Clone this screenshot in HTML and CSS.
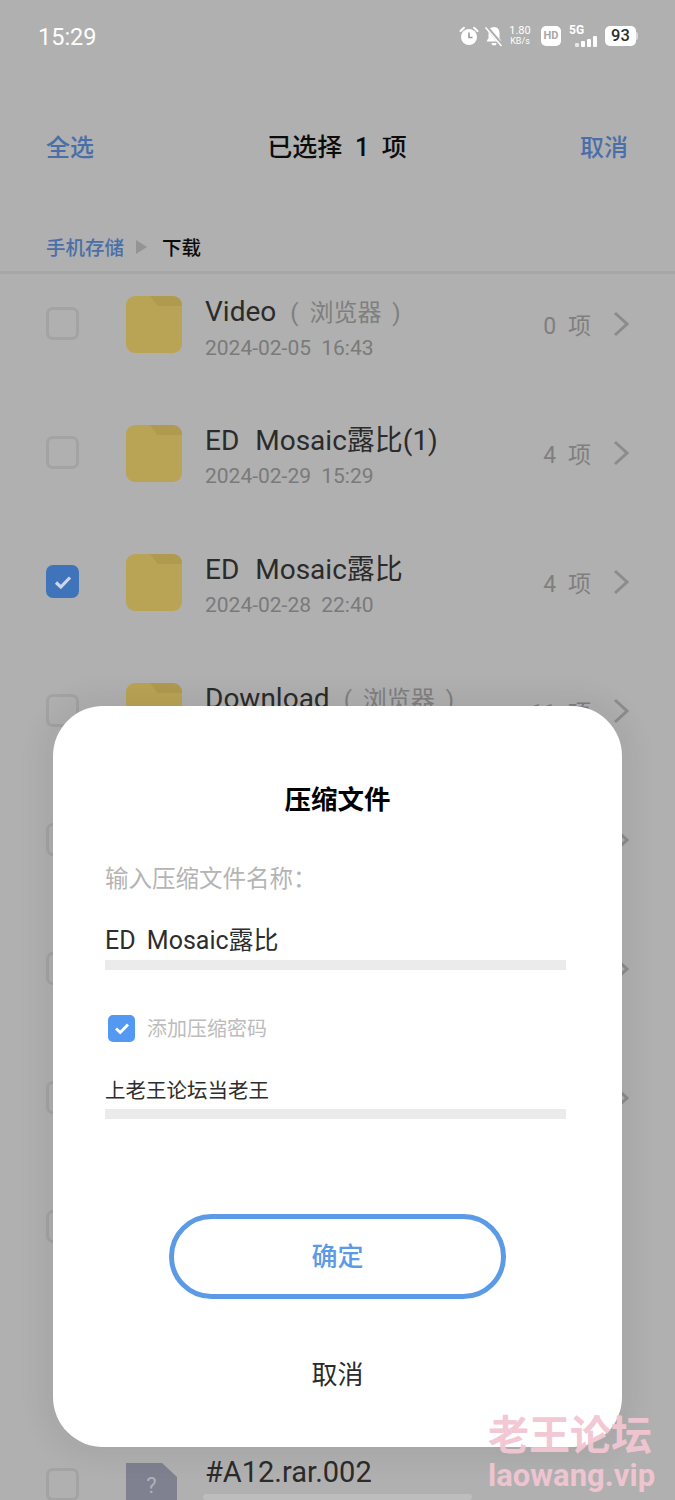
FILE: index.html
```html
<!DOCTYPE html>
<html lang="zh-CN">
<head>
<meta charset="utf-8">
<title>压缩文件</title>
<link rel="stylesheet" href="styles.css">
</head>
<body>
<div class="page">
  <header class="status">
    <span class="time">15:29</span>
    <div class="status-icons">
      <svg class="ic-alarm" width="20" height="20" viewBox="0 0 20 20"><circle cx="10" cy="11" r="8" fill="#fff"/><path d="M1.5 5 5 1.8M18.5 5 15 1.8" stroke="#fff" stroke-width="2" stroke-linecap="round"/><path d="M10 6.5V11.5H13.5" stroke="#9a9a9a" stroke-width="1.6" fill="none"/></svg>
      <svg class="ic-bell" width="20" height="22" viewBox="0 0 20 22"><path d="M10 2c-3.600 0-5.500 2.800-5.500 6v5L2.500 16.500h15L15.500 13V8c0-3.200-1.900-6-5.500-6z" fill="#fff"/><path d="M7.500 18a2.500 2.500 0 0 0 5 0z" fill="#fff"/><path d="M2 1.500 18 20" stroke="#b0b0b0" stroke-width="3.500"/><path d="M1.500 2.500 17.500 21" stroke="#fff" stroke-width="1.500"/></svg>
      <div class="speed"><span>1.80</span><span class="speed-unit">KB/s</span></div>
      <span class="hd">HD</span>
      <div class="signal">
        <span class="five-g">5G</span>
        <div class="bars"><i class="b1"></i><i class="b2"></i><i class="b3"></i><i class="b4"></i></div>
      </div>
      <div class="battery"><span class="batt-body">93</span><i class="batt-tip"></i></div>
    </div>
  </header>

  <nav class="nav">
    <span class="nav-link">全选</span>
    <span class="nav-title">已选择 1 项</span>
    <span class="nav-link">取消</span>
  </nav>

  <div class="crumbs">
    <span class="crumb-link">手机存储</span>
    <svg class="crumb-arrow" width="11" height="14" viewBox="0 0 11 14"><path d="M0 0 11 7 0 14z" fill="#949494"/></svg>
    <span class="crumb-here">下载</span>
  </div>

  <main class="list">
    <div class="row">
      <span class="check"></span>
      <span class="folder"><i></i></span>
      <div class="info"><div class="name">Video<span class="tag">( 浏览器 )</span></div><div class="date">2024-02-05 16:43</div></div>
      <span class="count">0 项</span>
      <svg class="chev" width="16" height="26" viewBox="0 0 16 26"><path d="M2 2 14 13 2 24" fill="none" stroke="#8c8c8c" stroke-width="3"/></svg>
    </div>
    <div class="row">
      <span class="check"></span>
      <span class="folder"><i></i></span>
      <div class="info"><div class="name">ED Mosaic露比(1)</div><div class="date">2024-02-29 15:29</div></div>
      <span class="count">4 项</span>
      <svg class="chev" width="16" height="26" viewBox="0 0 16 26"><path d="M2 2 14 13 2 24" fill="none" stroke="#8c8c8c" stroke-width="3"/></svg>
    </div>
    <div class="row">
      <span class="check check-on"><svg width="18" height="14" viewBox="0 0 18 14"><path d="M2 7.500 6.800 12 16 2.500" fill="none" stroke="#cdd6e4" stroke-width="3.200"/></svg></span>
      <span class="folder"><i></i></span>
      <div class="info"><div class="name">ED Mosaic露比</div><div class="date">2024-02-28 22:40</div></div>
      <span class="count">4 项</span>
      <svg class="chev" width="16" height="26" viewBox="0 0 16 26"><path d="M2 2 14 13 2 24" fill="none" stroke="#8c8c8c" stroke-width="3"/></svg>
    </div>
    <div class="row">
      <span class="check"></span>
      <span class="folder"><i></i></span>
      <div class="info"><div class="name">Download<span class="tag">( 浏览器 )</span></div><div class="date">&nbsp;</div></div>
      <span class="count">11 项</span>
      <svg class="chev" width="16" height="26" viewBox="0 0 16 26"><path d="M2 2 14 13 2 24" fill="none" stroke="#8c8c8c" stroke-width="3"/></svg>
    </div>
    <div class="row"><span class="check"></span><span class="spacer"></span><svg class="chev" width="16" height="26" viewBox="0 0 16 26"><path d="M2 2 14 13 2 24" fill="none" stroke="#8c8c8c" stroke-width="3"/></svg></div>
    <div class="row"><span class="check"></span><span class="spacer"></span><svg class="chev" width="16" height="26" viewBox="0 0 16 26"><path d="M2 2 14 13 2 24" fill="none" stroke="#8c8c8c" stroke-width="3"/></svg></div>
    <div class="row"><span class="check"></span><span class="spacer"></span><svg class="chev" width="16" height="26" viewBox="0 0 16 26"><path d="M2 2 14 13 2 24" fill="none" stroke="#8c8c8c" stroke-width="3"/></svg></div>
    <div class="row"><span class="check"></span><span class="spacer"></span></div>
    <div class="row"><span class="spacer"></span></div>
    <div class="row row-file">
      <span class="check"></span>
      <span class="file-icon">?</span>
      <div class="info info-file"><div class="name name-file">#A12.rar.002</div><div class="progress"></div></div>
    </div>
  </main>

  <section class="dialog">
    <h2 class="dlg-title">压缩文件</h2>
    <p class="dlg-label">输入压缩文件名称：</p>
    <div class="field">ED Mosaic露比</div>
    <div class="opt">
      <span class="opt-check"><svg width="16" height="13" viewBox="0 0 16 13"><path d="M2 6.500 6.200 10.500 14 2.500" fill="none" stroke="#fff" stroke-width="2.800"/></svg></span>
      <span class="opt-text">添加压缩密码</span>
    </div>
    <div class="field field-pass">上老王论坛当老王</div>
    <button class="ok" type="button">确定</button>
    <button class="cancel" type="button">取消</button>
  </section>

  <div class="watermark">
    <span class="wm-cn">老王论坛</span>
    <span class="wm-en">laowang.vip</span>
  </div>
</div>
</body>
</html>
```
FILE: styles.css
```css
* { box-sizing: border-box; }
html, body { margin: 0; padding: 0; }
body {
  width: 675px;
  height: 1500px;
  overflow: hidden;
  font-family: "Roboto", "Noto Sans CJK SC", sans-serif;
}
.page {
  position: relative;
  width: 675px;
  height: 1500px;
  overflow: hidden;
  background: #b0b0b0;
}
.status {
  height: 72px;
  display: flex;
  align-items: center;
  justify-content: space-between;
  padding: 0 37px 0 38px;
  color: #fff;
}
.time { font-size: 23.5px; line-height: 1; margin-top: 3px; }
.status-icons { display: flex; align-items: center; gap: 8px; }
.ic-bell { margin: 0 -4px 0 -3px; }
.speed {
  display: flex;
  flex-direction: column;
  font-size: 11px;
  line-height: 10px;
  text-align: center;
  width: 24px;
}
.speed-unit { font-size: 9px; }
.hd {
  width: 20px;
  height: 20px;
  margin-left: 1px;
  border-radius: 5px;
  background: #fff;
  color: #a8a8a8;
  font-size: 11px;
  font-weight: 700;
  line-height: 20px;
  text-align: center;
}
.signal { position: relative; width: 28px; height: 24px; }
.five-g { position: absolute; left: 0; top: 0; font-size: 12px; font-weight: 700; line-height: 12px; }
.bars { position: absolute; right: 0; bottom: 1px; display: flex; align-items: flex-end; gap: 2px; }
.bars i { width: 4px; background: #fff; display: block; border-radius: 1px; }
.b1 { height: 4px; opacity: .7; }
.b2 { height: 6px; }
.b3 { height: 8px; }
.b4 { height: 11px; }
.battery { display: flex; align-items: center; }
.batt-body {
  width: 31px;
  height: 20px;
  background: #fff;
  border-radius: 5px;
  color: #2e2e2e;
  font-size: 16.500px;
  font-weight: 500;
  line-height: 20px;
  text-align: center;
}
.batt-tip { width: 2px; height: 8px; background: #d8d8d8; border-radius: 0 2px 2px 0; display: block; }

.nav {
  height: 146px;
  display: flex;
  align-items: center;
  justify-content: space-between;
  padding: 0 47px 0 46px;
}
.nav-link { color: #4a6fa8; font-size: 24px; font-weight: 500; }
.nav-title { color: #0c0c0c; font-size: 25px; font-weight: 500; word-spacing: 6.500px; }

.crumbs {
  height: 49px;
  margin-top: 7px;
  padding: 0 46px 3px;
  display: flex;
  align-items: center;
  gap: 12px;
  border-bottom: 3px solid #a6a6a6;
}
.crumb-link { color: #4a6fa8; font-size: 19.500px; font-weight: 500; }
.crumb-here { color: #0c0c0c; font-size: 19.500px; font-weight: 500; margin-left: 3px; }

.list { display: flex; flex-direction: column; margin-top: -15px; }
.row {
  flex: none;
  height: 129px;
  display: flex;
  align-items: center;
  padding: 0 46px;
}
.check {
  flex: none;
  width: 33px;
  height: 33px;
  border: 3px solid #a3a3a3;
  border-radius: 7px;
  display: flex;
  align-items: center;
  justify-content: center;
}
.check-on { background: #3f74bb; border-color: #3f74bb; }
.folder {
  position: relative;
  flex: none;
  width: 56px;
  height: 57px;
  margin: 2px 0 0 47px;
  border-radius: 9px;
  background: #b9a354;
  overflow: hidden;
}
.folder i {
  position: absolute;
  right: 0;
  top: 0;
  width: 32px;
  height: 10px;
  background: #b09a50;
  clip-path: polygon(0 0, 100% 0, 100% 100%, 24% 100%);
}
.info { flex: 1; min-width: 0; margin-left: 23px; padding-top: 9px; }
.name { color: #2b2b2b; font-size: 28px; line-height: 36px; word-spacing: 9px; white-space: nowrap; margin-top: -2px; }
.tag { color: #7f7f7f; font-size: 24px; word-spacing: 5px; margin-left: 14px; }
.date { color: #7a7a7a; font-size: 21px; line-height: 26px; margin-top: 4px; word-spacing: 5px; }
.count { color: #7f7f7f; font-size: 23px; word-spacing: 6px; margin-right: 22px; }
.chev { flex: none; }
.spacer { flex: 1; }

.file-icon {
  flex: none;
  align-self: flex-start;
  width: 51px;
  height: 37px;
  margin: 43px 0 0 47px;
  padding-top: 9px;
  background: #7f8190;
  color: #aeb0ba;
  font-size: 22px;
  line-height: 28px;
  text-align: center;
  clip-path: polygon(0 0, 36px 0, 100% 14px, 100% 100%, 0 100%);
}
.info-file { align-self: flex-start; margin: 34px 0 0 28px; padding-top: 0; }
.name-file { font-size: 29px; margin-top: 0; }
.progress { width: 269px; height: 6px; border-radius: 3px; background: #bdbdbd; margin: 4px 0 0 -2px; }

.dialog {
  position: absolute;
  left: 53px;
  top: 706px;
  width: 569px;
  height: 741px;
  padding: 0 56px 0 52px;
  background: #fff;
  border-radius: 50px;
  box-shadow: 0 0 24px 14px rgba(0, 0, 0, .05);
  display: flex;
  flex-direction: column;
}
.dlg-title {
  margin: 76px 0 0 4px;
  font-size: 26.500px;
  line-height: 36px;
  font-weight: 700;
  color: #000;
  text-align: center;
}
.dlg-label { margin: 45px 0 0; font-size: 23.500px; line-height: 32px; color: #b4b4b4; }
.field {
  height: 45px;
  margin-top: 30px;
  font-size: 25px;
  line-height: 32px;
  color: #2d2d2d;
  word-spacing: 5px;
  border-bottom: 10px solid #ebebeb;
}
.opt { display: flex; align-items: center; gap: 12px; margin: 45px 0 0 3px; height: 27px; }
.opt-check {
  width: 27px;
  height: 27px;
  border-radius: 5px;
  background: #5398f2;
  display: flex;
  align-items: center;
  justify-content: center;
}
.opt-text { color: #bcbcbc; font-size: 20px; margin-top: -2px; }
.field-pass { margin-top: 32px; font-size: 20.500px; line-height: 34px; }
.ok {
  align-self: center;
  width: 337px;
  height: 85px;
  margin: 95px 0 0 4px;
  padding: 0 0 4px;
  border: 5px solid #5c9ae6;
  border-radius: 43px;
  background: #fff;
  color: #5c9ae6;
  font: 500 26px "Roboto", "Noto Sans CJK SC", sans-serif;
}
.cancel {
  align-self: center;
  margin: 58px 0 0 4px;
  padding: 0;
  border: 0;
  background: none;
  color: #2b2b2b;
  font: 400 26px/36px "Roboto", "Noto Sans CJK SC", sans-serif;
}
.watermark {
  position: absolute;
  left: 488px;
  top: 1413px;
  display: flex;
  flex-direction: column;
  color: #f2c6d2;
  font-weight: 700;
  opacity: .95;
}
.wm-cn { font-size: 41px; line-height: 46px; }
.wm-en { font-size: 31px; line-height: 36px; margin-top: -1px; }
```
